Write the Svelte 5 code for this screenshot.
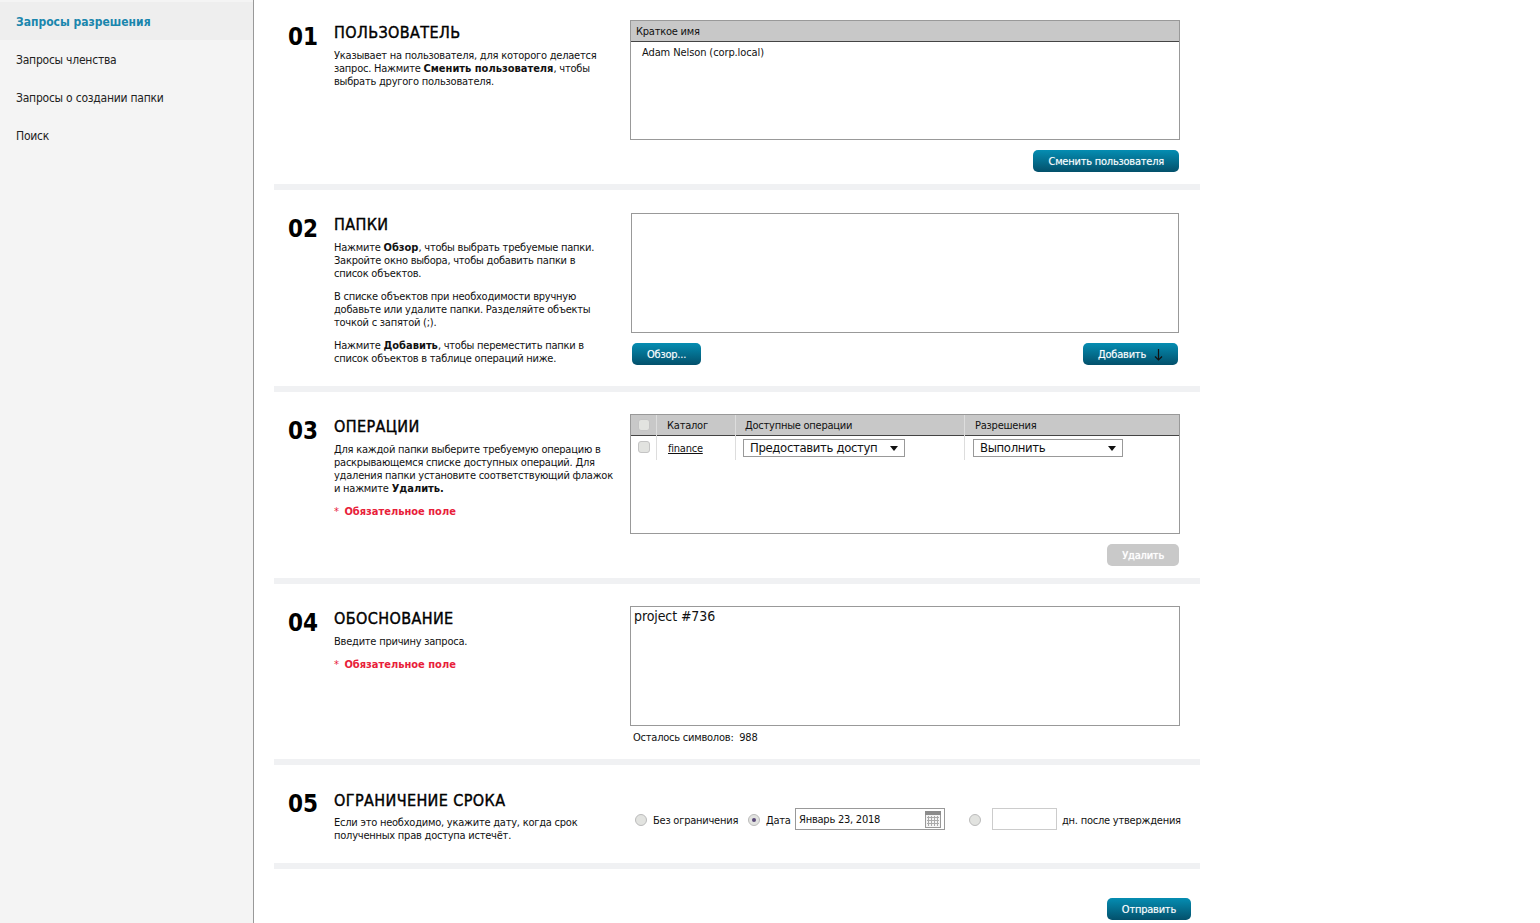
<script>
    const navItems = ['Запросы разрешения', 'Запросы членства', 'Запросы о создании папки', 'Поиск'];
</script>

<style>
    :global(body) {
        margin: 0;
        background: #fff;
        color: #111;
        font-family: "DejaVu Sans", "Noto Sans", sans-serif;
        font-stretch: condensed;
        font-size: 11px;
        letter-spacing: -0.23px;
    }

    b {
        letter-spacing: 0;
    }

    .page {
        display: flex;
        min-height: 923px;
    }

    .sidebar {
        width: 253px;
        flex: none;
        background: #f4f4f4;
        border-right: 1px solid #999;
    }

    .nav-item {
        height: 38px;
        line-height: 40px;
        padding-left: 16px;
        font-size: 12px;
        color: #222;
    }

    .nav-item.active {
        margin-top: 2px;
        background: #eee;
        color: #1a86ad;
        font-weight: 600;
        letter-spacing: 0;
    }

    .main {
        width: 926px;
        margin-left: 20px;
    }

    .section {
        display: grid;
        grid-template-columns: 46px 296px 550px;
        padding: 22px 0 12px 14px;
        border-bottom: 6px solid #f0f1f3;
    }

    .section.first {
        padding-top: 20px;
    }

    .section.folders {
        padding-bottom: 21px;
    }

    .section.reason {
        padding-bottom: 15px;
    }

    .section.expiry-section {
        padding-bottom: 21px;
    }

    .num {
        margin-top: 2px;
        font-size: 24px;
        font-weight: 700;
        letter-spacing: 0;
        line-height: 30px;
        color: #000;
    }

    h2 {
        margin: 3px 0 0;
        font-size: 16px;
        font-weight: 400;
        letter-spacing: 0.4px;
        line-height: 20px;
        color: #000;
        -webkit-text-stroke: 0.4px #000;
    }

    .expiry-section h2 {
        margin-top: 4px;
    }

    p {
        margin: 6px 0 0;
        line-height: 13px;
        white-space: nowrap;
    }

    p + p {
        margin-top: 10px;
    }

    .expiry-section p {
        margin-top: 5px;
    }

    .req {
        color: #e8203a;
        font-weight: 700;
        letter-spacing: 0;
    }

    .req span {
        margin-right: 2px;
        font-weight: 400;
    }

    .box {
        border: 1px solid #999;
        box-sizing: border-box;
        height: 120px;
        background: #fff;
    }

    .box.inset {
        margin: 1px 1px 0;
    }

    .box-head {
        height: 20px;
        line-height: 22px;
        padding-left: 5px;
        background: #c8c8c8;
        border-bottom: 1px solid #444;
    }

    .box-body {
        padding: 4px 11px;
        letter-spacing: -0.1px;
        line-height: 13px;
    }

    .actions {
        display: flex;
        justify-content: flex-end;
        margin-top: 10px;
        padding-right: 1px;
    }

    .actions.spread {
        justify-content: space-between;
        padding: 0 2px;
    }

    .btn {
        display: flex;
        align-items: center;
        justify-content: center;
        gap: 8px;
        box-sizing: border-box;
        height: 22px;
        padding: 0 15px;
        border: 0;
        border-radius: 5px;
        background: linear-gradient(180deg, #058db2 0%, #03506b 100%);
        color: #fff;
        font: inherit;
        font-stretch: condensed;
        letter-spacing: inherit;
        text-shadow: 0 0 1px rgba(255, 255, 255, 0.4);
    }

    .btn.disabled {
        background: #c9c9c9;
        color: #fff;
        text-shadow: 0 0 1px #fff;
    }

    /* operations table */
    .ops-head,
    .ops-row {
        display: grid;
        grid-template-columns: 26px 79px 229px 1fr;
    }

    .ops-head {
        height: 20px;
        line-height: 22px;
        background: #c8c8c8;
        border-bottom: 1px solid #444;
    }

    .ops-row {
        height: 24px;
    }

    .cell {
        display: flex;
        align-items: center;
        padding-left: 7px;
        border-right: 1px solid #ddd;
    }

    .cell:last-child {
        border-right: 0;
    }

    .ops-head .cell {
        padding-left: 9px;
    }

    .ops-head .cell:first-child {
        padding-left: 7px;
    }

    .ops-head .cell:nth-child(2),
    .ops-head .cell:last-child {
        padding-left: 10px;
    }

    .ops-row .cell:nth-child(2) {
        padding-left: 11px;
    }

    .ops-row .cell:last-child {
        padding-left: 8px;
    }

    .check {
        width: 10px;
        height: 10px;
        margin-top: -2px;
        border: 1px solid #c4c4c4;
        border-radius: 3px;
        background: #e2e3e0;
    }

    .select {
        display: flex;
        align-items: center;
        justify-content: space-between;
        box-sizing: border-box;
        height: 18px;
        padding: 0 6px;
        border: 1px solid #999;
        font-size: 13px;
        letter-spacing: -0.35px;
        line-height: 16px;
        background: #fff;
    }

    .select.op {
        width: 162px;
    }

    .select.perm {
        width: 150px;
    }

    .arrow {
        width: 0;
        height: 0;
        border-left: 4px solid transparent;
        border-right: 4px solid transparent;
        border-top: 5px solid #111;
    }

    a {
        color: #111;
        text-decoration: underline;
    }

    .textarea {
        padding: 0 3px;
        font-size: 14px;
        letter-spacing: -0.1px;
        line-height: 18px;
    }

    .counter {
        margin-top: 5px;
        padding-left: 3px;
        line-height: 13px;
    }

    /* expiry row */
    .expiry {
        display: flex;
        align-items: center;
        height: 22px;
        margin-top: 21px;
        padding-left: 5px;
        white-space: nowrap;
    }

    .radio {
        width: 10px;
        height: 10px;
        flex: none;
        display: flex;
        align-items: center;
        justify-content: center;
        margin-top: 2px;
        border: 1px solid #bbb;
        border-radius: 50%;
        background: #e2e3e0;
    }

    .radio.second {
        margin-left: 9px;
    }

    .radio.third {
        margin-left: 24px;
    }

    .radio i {
        width: 4px;
        height: 4px;
        border-radius: 50%;
        background: #5a4a78;
    }

    .label {
        flex: none;
        margin: 2px 0 0 6px;
    }

    .label.none {
        width: 86px;
    }

    .label.on-date {
        width: 29px;
    }

    .label.after {
        margin-left: 5px;
    }

    .input {
        display: flex;
        align-items: center;
        justify-content: space-between;
        box-sizing: border-box;
        flex: none;
        height: 22px;
        padding: 0 3px;
        border: 1px solid #999;
    }

    .date {
        width: 150px;
    }

    .days {
        width: 65px;
        margin-left: 11px;
        border-color: #ccc;
    }

    .submit-row {
        display: flex;
        justify-content: flex-end;
        padding: 29px 9px 0 0;
    }
</style>

<div class="page">
    <nav class="sidebar">
        {#each navItems as item, i}
            <div class="nav-item" class:active={i === 0}>{item}</div>
        {/each}
    </nav>

    <main class="main">
        <section class="section first">
            <div class="num">01</div>
            <div>
                <h2>ПОЛЬЗОВАТЕЛЬ</h2>
                <p>Указывает на пользователя, для которого делается<br />запрос. Нажмите <b>Сменить пользователя</b>, чтобы<br />выбрать другого пользователя.</p>
            </div>
            <div>
                <div class="box">
                    <div class="box-head">Краткое имя</div>
                    <div class="box-body">Adam Nelson (corp.local)</div>
                </div>
                <div class="actions"><button class="btn">Сменить пользователя</button></div>
            </div>
        </section>

        <section class="section folders">
            <div class="num">02</div>
            <div>
                <h2>ПАПКИ</h2>
                <p>Нажмите <b>Обзор</b>, чтобы выбрать требуемые папки.<br />Закройте окно выбора, чтобы добавить папки в<br />список объектов.</p>
                <p>В списке объектов при необходимости вручную<br />добавьте или удалите папки. Разделяйте объекты<br />точкой с запятой (;).</p>
                <p>Нажмите <b>Добавить</b>, чтобы переместить папки в<br />список объектов в таблице операций ниже.</p>
            </div>
            <div>
                <div class="box inset"></div>
                <div class="actions spread">
                    <button class="btn">Обзор...</button>
                    <button class="btn">Добавить
                        <svg width="9" height="13" viewBox="0 0 9 13"><path d="M4.5 1v11M1 8.5l3.5 3.5L8 8.5" fill="none" stroke="#111" stroke-width="1.2" /></svg>
                    </button>
                </div>
            </div>
        </section>

        <section class="section">
            <div class="num">03</div>
            <div>
                <h2>ОПЕРАЦИИ</h2>
                <p>Для каждой папки выберите требуемую операцию в<br />раскрывающемся списке доступных операций. Для<br />удаления папки установите соответствующий флажок<br />и нажмите <b>Удалить.</b></p>
                <p class="req"><span>*</span> Обязательное поле</p>
            </div>
            <div>
                <div class="box">
                    <div class="ops-head">
                        <div class="cell"><span class="check"></span></div>
                        <div class="cell">Каталог</div>
                        <div class="cell">Доступные операции</div>
                        <div class="cell">Разрешения</div>
                    </div>
                    <div class="ops-row">
                        <div class="cell"><span class="check"></span></div>
                        <div class="cell"><a href="#finance">finance</a></div>
                        <div class="cell"><div class="select op">Предоставить доступ<span class="arrow"></span></div></div>
                        <div class="cell"><div class="select perm">Выполнить<span class="arrow"></span></div></div>
                    </div>
                </div>
                <div class="actions"><button class="btn disabled">Удалить</button></div>
            </div>
        </section>

        <section class="section reason">
            <div class="num">04</div>
            <div>
                <h2>ОБОСНОВАНИЕ</h2>
                <p>Введите причину запроса.</p>
                <p class="req"><span>*</span> Обязательное поле</p>
            </div>
            <div>
                <div class="box textarea">project #736</div>
                <div class="counter">Осталось символов:&nbsp; 988</div>
            </div>
        </section>

        <section class="section expiry-section">
            <div class="num">05</div>
            <div>
                <h2>ОГРАНИЧЕНИЕ СРОКА</h2>
                <p>Если это необходимо, укажите дату, когда срок<br />полученных прав доступа истечёт.</p>
            </div>
            <div class="expiry">
                <span class="radio"></span>
                <span class="label none">Без ограничения</span>
                <span class="radio second"><i></i></span>
                <span class="label on-date">Дата</span>
                <div class="input date">Январь 23, 2018
                    <svg width="16" height="17" viewBox="0 0 16 17">
                        <rect x="0.5" y="0.5" width="15" height="16" fill="#f4f4f4" stroke="#999" />
                        <rect x="0" y="0" width="16" height="4" fill="#8c8c8c" />
                        <path d="M2 6.5h12M2 9.5h12M2 12.5h12M3.5 5v10M6.5 5v10M9.5 5v10M12.5 5v10" stroke="#aaa" stroke-width="1" />
                    </svg>
                </div>
                <span class="radio third"></span>
                <div class="input days"></div>
                <span class="label after">дн. после утверждения</span>
            </div>
        </section>

        <div class="submit-row"><button class="btn">Отправить</button></div>
    </main>
</div>
